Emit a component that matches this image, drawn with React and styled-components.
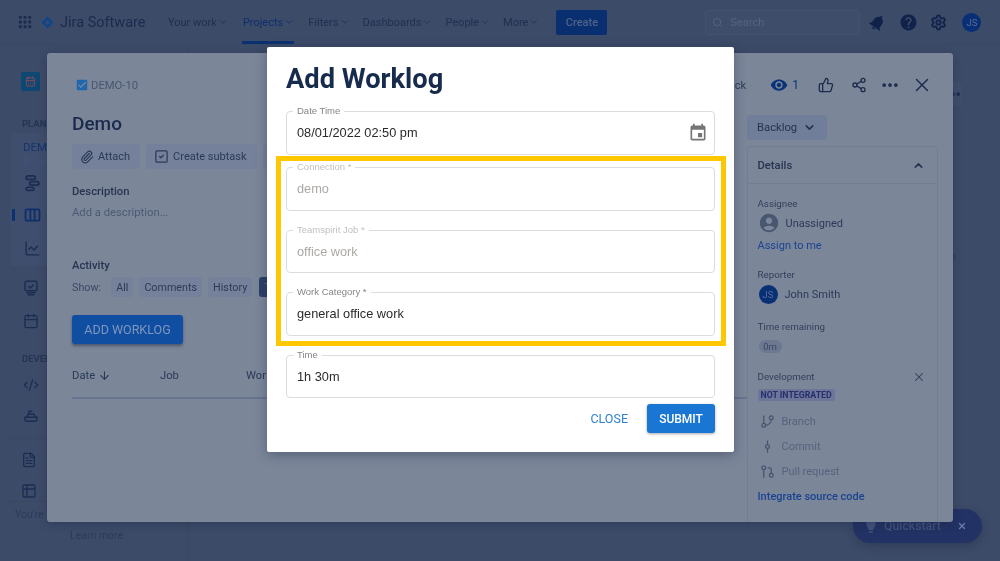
import React from 'react';
import styled, { createGlobalStyle } from 'styled-components';
import {
  ArrowDown, Calendar, CalendarDays, ChartLine, ChevronDown, ChevronUp, CodeXml, Ellipsis, FileText, GitBranch,
  GitCommitVertical, GitPullRequest, Grip, Paperclip, Search, Settings, Share2, SquareCheck, Table2, ThumbsUp, X,
} from 'lucide-react';
import { MdCheckBox, MdEvent, MdHelp, MdLightbulb, MdNotifications, MdVisibility, MdAccountCircle } from 'react-icons/md';

const GlobalStyle = createGlobalStyle`
  html, body { margin: 0; padding: 0; background: #3c4b68; }
  * { box-sizing: border-box; }
`;

const Stage = styled.div`
  position: relative;
  width: 1000px;
  height: 561px;
  overflow: hidden;
  background: #3c4b68;
  font-family: Roboto, "Liberation Sans", sans-serif;
  color: #1f2c4a;
  filter: blur(0.3px);
`;

const TopNav = styled.header`
  display: flex;
  align-items: center;
  height: 45px;
  padding: 0 18px 0 17px;
  border-bottom: 1px solid #394763;
`;

const Brand = styled.div`
  display: flex;
  flex: none;
  align-items: center;
  gap: 6px;
  width: 151px;
  font-size: 14.5px;
  white-space: nowrap;
  color: #1b2b4e;
  svg.grip { margin-right: 2px; }
`;

const NavItem = styled.div`
  position: relative;
  display: flex;
  flex: none;
  align-items: center;
  align-self: stretch;
  gap: 1px;
  margin-right: ${(p) => p.$gap}px;
  font-size: 11px;
  white-space: nowrap;
  color: ${(p) => (p.$active ? '#0f2f6c' : '#1f2f50')};
  &::after {
    content: '';
    display: ${(p) => (p.$active ? 'block' : 'none')};
    position: absolute;
    left: -1px;
    right: 0;
    bottom: 0;
    height: 3px;
    background: #0b3270;
  }
`;

const CreateBtn = styled.div`
  display: flex;
  flex: none;
  align-items: center;
  justify-content: center;
  width: 51px;
  height: 25px;
  border-radius: 2px;
  background: #0a2f70;
  color: #4f6388;
  font-size: 11px;
  font-weight: 500;
`;

const SearchBox = styled.div`
  display: flex;
  flex: none;
  align-items: center;
  gap: 7px;
  width: 155px;
  height: 25px;
  margin-left: 98px;
  padding-left: 6px;
  border: 1px solid #44536d;
  border-radius: 3px;
  background: #3e4d6a;
  font-size: 11px;
  color: #56657f;
`;

const NavIcons = styled.div`
  display: flex;
  align-items: center;
  gap: 12px;
  margin-left: 8px;
  color: #10224a;
`;

const Avatar = styled.div`
  display: flex;
  flex: none;
  align-items: center;
  justify-content: center;
  width: ${(p) => p.$size}px;
  height: ${(p) => p.$size}px;
  margin-left: ${(p) => p.$ml || 0}px;
  border-radius: 50%;
  background: #092f74;
  color: #566c98;
  font-size: ${(p) => p.$font}px;
`;

const Body = styled.div`
  display: flex;
`;

const Sidebar = styled.aside`
  display: flex;
  flex: none;
  flex-direction: column;
  width: 189px;
  height: 516px;
  border-right: 1px solid #394763;
`;

const ProjectIcon = styled.div`
  display: flex;
  align-items: center;
  justify-content: center;
  width: 19px;
  height: 19px;
  margin: 27px 0 27px 21px;
  border-radius: 2px;
  background: #0e4872;
  color: #8a4a5a;
`;

const SideHeading = styled.div`
  margin: ${(p) => p.$top || 0}px 0 0 22px;
  font-size: 9.5px;
  font-weight: 700;
  color: #263552;
  line-height: 12px;
`;

const SideGroup = styled.div`
  width: 176px;
  margin: 3px 0 7px 10px;
  padding: 7px 0 3px 13px;
  border-radius: 3px;
  background: #3f4e6c;
`;

const SideProject = styled.div`
  font-size: 11.5px;
  line-height: 14px;
  color: ${(p) => (p.$muted ? '#41537a' : '#143470')};
`;

const SideIcon = styled.div`
  position: relative;
  display: flex;
  align-items: center;
  height: ${(p) => p.$h}px;
  margin-top: ${(p) => p.$top || 0}px;
  padding-left: ${(p) => p.$pad ?? 23}px;
  color: #1c2d52;
  &::before {
    content: '';
    display: ${(p) => (p.$marker ? 'block' : 'none')};
    position: absolute;
    left: -11px;
    top: 12px;
    width: 3px;
    height: 12px;
    background: #0b3270;
  }
`;

const SideDivider = styled.div`
  width: 170px;
  height: 1px;
  flex: none;
  margin: ${(p) => p.$m};
  background: #394763;
`;

const SideNote = styled.div`
  margin-left: ${(p) => p.$left}px;
  margin-top: ${(p) => p.$top}px;
  font-size: 10.5px;
  line-height: 12px;
  color: #2c3b5a;
  white-space: nowrap;
`;

const PageContent = styled.main`
  display: flex;
  flex: 1;
  flex-direction: column;
  align-items: flex-end;
  padding: 37px 38px 0 0;
`;

const BoardMenu = styled.div`
  display: flex;
  align-items: center;
  justify-content: flex-end;
  width: 24px;
  height: 24px;
  border-radius: 3px;
  background: #3f4e6b;
  color: #1d2c4d;
`;

const HelpMark = styled.div`
  margin: 146px 6px 0 0;
  font-size: 12px;
  color: #2c3b5a;
`;

const IssueModal = styled.section`
  position: absolute;
  left: 47px;
  top: 53px;
  width: 906px;
  height: 469px;
  padding: 0 15px 0 25px;
  border-radius: 3px;
  overflow: hidden;
  background: #7b8699;
  box-shadow: 0 2px 8px rgba(20, 30, 60, 0.3);
`;

const IssueTop = styled.div`
  display: flex;
  align-items: center;
  height: 59px;
  padding: 5px 0 0 3px;
  font-size: 11.25px;
  color: #3f4e6b;
`;

const IssueKey = styled.div`
  display: flex;
  align-items: center;
  gap: 2px;
  color: #485670;
  svg { color: #1f68b0; }
`;

const TopActions = styled.div`
  display: flex;
  align-items: center;
  margin-left: auto;
  color: #1d2c4d;
`;

const FeedbackText = styled.span`
  margin-right: 24px;
  font-size: 11.25px;
  color: #2f3e5c;
`;

const WatchCount = styled.div`
  display: flex;
  align-items: center;
  gap: 4px;
  margin-right: 9px;
  font-size: 12px;
  color: #0a3276;
`;

const ActionSlot = styled.div`
  display: flex;
  justify-content: center;
  width: ${(p) => p.$w}px;
`;

const IssueBody = styled.div`
  display: grid;
  grid-template-columns: 675px 191px;
`;

const MainCol = styled.div`
  display: flex;
  flex-direction: column;
`;

const IssueTitle = styled.h1`
  margin: 0;
  font-size: 19px;
  font-weight: 500;
  line-height: 24px;
  color: #1b2a4c;
`;

const ActionRow = styled.div`
  display: flex;
  gap: 6px;
  margin-top: 8px;
`;

const GhostBtn = styled.div`
  display: flex;
  align-items: center;
  gap: 4px;
  height: 25px;
  padding: 0 10px 0 8px;
  border-radius: 3px;
  background: #75819a;
  font-size: 11px;
  color: #2b3a57;
`;

const SectionLabel = styled.div`
  margin-top: ${(p) => p.$top}px;
  font-size: 11.25px;
  font-weight: 500;
  line-height: 15px;
  color: #26344f;
`;

const Placeholder = styled.div`
  margin-top: 6px;
  font-size: 11.25px;
  line-height: 15px;
  color: #4c5a74;
`;

const ShowRow = styled.div`
  display: flex;
  align-items: center;
  gap: 6px;
  margin-top: 3.5px;
  height: 22px;
  font-size: 10.75px;
  color: #3b4966;
`;

const ShowTab = styled.div`
  display: flex;
  flex: none;
  align-items: center;
  height: 20px;
  min-width: ${(p) => (p.$on ? 40 : 0)}px;
  padding: 0 5px;
  margin-left: ${(p) => p.$left || 0}px;
  border-radius: 3px;
  background: ${(p) => (p.$on ? '#2c3f6a' : '#75819a')};
  font-size: 10.75px;
  color: ${(p) => (p.$on ? '#66769a' : '#2b3a57')};
`;

const AddWorklog = styled.div`
  display: flex;
  align-items: center;
  justify-content: center;
  width: 111px;
  height: 29px;
  margin-top: 17px;
  border-radius: 3px;
  background: #0f4ea0;
  box-shadow: 0 2px 3px rgba(20, 30, 60, 0.45);
  font-size: 12.5px;
  color: #7f96bd;
`;

const TableHead = styled.div`
  display: grid;
  grid-template-columns: 88px 86px 1fr;
  align-items: center;
  height: 51px;
  margin-top: 4px;
  padding-top: 5px;
  border-bottom: 2px solid #67748f;
  font-size: 11.25px;
  color: #2b3a57;
`;

const SortLabel = styled.div`
  display: flex;
  align-items: center;
  gap: 3px;
`;

const SideCol = styled.div`
  display: flex;
  flex-direction: column;
`;

const StatusBtn = styled.div`
  display: flex;
  align-items: center;
  gap: 6px;
  width: 80px;
  height: 25px;
  margin-top: 3px;
  padding-left: 10px;
  border-radius: 3px;
  background: #717e99;
  font-size: 11.25px;
  color: #26344f;
`;

const DetailsPanel = styled.div`
  height: 380px;
  margin-top: 6px;
  border: 1px solid #727e93;
  border-radius: 3px;
`;

const DetailsHead = styled.div`
  display: flex;
  align-items: center;
  justify-content: space-between;
  height: 37px;
  padding: 0 12px 0 9.5px;
  border-bottom: 1px solid #727e93;
  font-size: 11.25px;
  font-weight: 500;
  color: #26344f;
`;

const DetailsBody = styled.div`
  display: flex;
  flex-direction: column;
  padding: 0 12px 0 9.5px;
`;

const FieldLabel = styled.div`
  display: flex;
  align-items: center;
  justify-content: space-between;
  margin-top: ${(p) => p.$top}px;
  font-size: 9.75px;
  line-height: 14px;
  color: #333f5a;
  svg { margin-right: -1px; }
`;

const PersonRow = styled.div`
  display: flex;
  align-items: center;
  gap: 7px;
  margin-top: 1px;
  height: 22px;
  padding-left: 1px;
  font-size: 11px;
  color: #2b3a57;
`;

const LinkText = styled.div`
  margin-top: ${(p) => p.$top}px;
  font-size: 11px;
  font-weight: ${(p) => p.$weight || 400};
  line-height: 15px;
  color: #1b4392;
`;

const TimePill = styled.div`
  width: 23px;
  height: 13px;
  margin: 6px 0 0 1px;
  border-radius: 7px;
  background: #6c7890;
  font-size: 9.5px;
  line-height: 13px;
  text-align: center;
  color: #3a4763;
`;

const Lozenge = styled.div`
  align-self: flex-start;
  height: 12px;
  margin-top: 5px;
  padding: 0 3px;
  border-radius: 2px;
  background: #6d7599;
  font-size: 8.75px;
  font-weight: 700;
  line-height: 12px;
  color: #24306c;
`;

const DevList = styled.div`
  margin-top: 8px;
`;

const DevRow = styled.div`
  display: flex;
  align-items: center;
  gap: 7px;
  height: 25px;
  padding-left: 2px;
  font-size: 11px;
  color: #56637c;
  svg { color: #47556f; }
`;

const Quickstart = styled.div`
  position: absolute;
  left: 853px;
  top: 509px;
  display: flex;
  align-items: center;
  width: 129px;
  height: 34px;
  padding-left: 10px;
  border-radius: 17px;
  background: #233264;
  box-shadow: 0 3px 8px rgba(20, 30, 60, 0.3);
  font-size: 12.25px;
  font-weight: 500;
  color: #445279;
  svg.bulb { margin-right: 5px; }
  svg.close { margin-left: 16px; color: #6c7ba8; }
`;

const WorklogDialog = styled.form`
  position: absolute;
  left: 267px;
  top: 47px;
  display: flex;
  flex-direction: column;
  width: 467px;
  height: 405px;
  padding: 0 19px;
  border-radius: 2px;
  background: #fff;
  box-shadow: 0 3px 12px rgba(20, 30, 60, 0.35);
  font-family: "Liberation Sans", Arial, sans-serif;
`;

const DialogTitle = styled.h2`
  margin: 15px 0 0;
  font-family: Roboto, "Liberation Sans", sans-serif;
  font-size: 27.25px;
  font-weight: 700;
  line-height: 34px;
  color: #172b4d;
`;

const FieldList = styled.div`
  display: flex;
  flex-direction: column;
  margin-top: 15px;
`;

const FieldBox = styled.div`
  position: relative;
  display: flex;
  align-items: center;
  justify-content: space-between;
  height: 43.5px;
  margin-top: ${(p) => p.$top}px;
  padding: 0 6px 0 10px;
  border: 1.5px solid #dcdcdc;
  border-radius: 4px;
`;

const FloatLabel = styled.label`
  position: absolute;
  left: 6px;
  top: -7px;
  padding: 0 4px;
  background: #fff;
  font-size: 9.5px;
  line-height: 12px;
  color: ${(p) => (p.$disabled ? '#c0c0c0' : '#858585')};
`;

const FieldValue = styled.div`
  font-size: 12.75px;
  color: ${(p) => (p.$disabled ? '#ada8a4' : '#2a2a2a')};
`;

const DialogActions = styled.div`
  display: flex;
  align-items: center;
  justify-content: flex-end;
  gap: 19px;
  margin-top: 6px;
  font-family: Roboto, "Liberation Sans", sans-serif;
`;

const CloseBtn = styled.div`
  font-size: 12.5px;
  font-weight: 400;
  color: #2f80d2;
`;

const SubmitBtn = styled.div`
  display: flex;
  align-items: center;
  justify-content: center;
  width: 68px;
  height: 29px;
  border-radius: 3px;
  background: #1976d2;
  box-shadow: 0 1px 3px rgba(0, 0, 0, 0.35);
  font-size: 12px;
  font-weight: 500;
  color: #fff;
`;

const Highlight = styled.div`
  position: absolute;
  left: 9px;
  top: 109px;
  width: 450px;
  height: 190px;
  border: 5px solid #ffc700;
  pointer-events: none;
`;

const fields = [
  { label: 'Date Time', value: '08/01/2022 02:50 pm', icon: true, top: 0 },
  { label: 'Connection *', value: 'demo', disabled: true, top: 12.5 },
  { label: 'Teamspirit Job *', value: 'office work', disabled: true, top: 19 },
  { label: 'Work Category *', value: 'general office work', top: 19 },
  { label: 'Time', value: '1h 30m', top: 19 },
];

const navItems = [
  { label: 'Your work', gap: 15 },
  { label: 'Projects', gap: 14, active: true },
  { label: 'Filters', gap: 13 },
  { label: 'Dashboards', gap: 13 },
  { label: 'People', gap: 13 },
  { label: 'More', gap: 17 },
];

function ShipIcon() {
  return (
    <svg width="16" height="16" viewBox="0 0 24 24" fill="none" stroke="currentColor" strokeWidth="2.2">
      <path d="M3 14h18v3a3 3 0 0 1-3 3H6a3 3 0 0 1-3-3z" />
      <path d="M6 14l2-5h8l3 5" />
      <path d="M9 9V5h5" />
    </svg>
  );
}

function RoadmapIcon() {
  return (
    <svg width="17" height="18" viewBox="0 0 24 24" fill="none" stroke="currentColor" strokeWidth="2.4">
      <rect x="3" y="2" width="13" height="5" rx="2.5" />
      <rect x="8" y="10" width="13" height="5" rx="2.5" />
      <rect x="3" y="18" width="11" height="4.5" rx="2.2" />
    </svg>
  );
}

function BoardIcon() {
  return (
    <svg width="17" height="14" viewBox="0 0 24 20" fill="none" stroke="#0f2f6c" strokeWidth="2.6">
      <rect x="2" y="2" width="20" height="16" rx="2" />
      <path d="M9 2v16M15 2v16" />
    </svg>
  );
}

function MonitorIcon() {
  return (
    <svg width="16" height="16" viewBox="0 0 24 24" fill="none" stroke="currentColor" strokeWidth="2.2">
      <rect x="3" y="2" width="18" height="14" rx="2" />
      <path d="M8 9l3 3 5-5M5 19h14M7 22h10" />
    </svg>
  );
}

function LogoMark() {
  return (
    <svg width="13" height="13" viewBox="0 0 24 24">
      <path d="M12 1L23 12 12 23 1 12z" fill="#104688" />
      <path d="M12 8l4 4-4 4-4-4z" fill="#3c4b68" />
    </svg>
  );
}

export default function App() {
  return (
    <>
      <GlobalStyle />
      <Stage>
        <TopNav>
          <Brand>
            <Grip className="grip" size={16} strokeWidth={3} />
            <LogoMark />
            <span>Jira Software</span>
          </Brand>
          {navItems.map((item) => (
            <NavItem key={item.label} $gap={item.gap} $active={item.active}>
              {item.label}
              <ChevronDown size={10} />
            </NavItem>
          ))}
          <CreateBtn>Create</CreateBtn>
          <SearchBox>
            <Search size={11} />
            Search
          </SearchBox>
          <NavIcons>
            <MdNotifications size={19} style={{ transform: 'rotate(35deg)' }} />
            <MdHelp size={19} />
            <Settings size={17} strokeWidth={2.6} />
            <Avatar $size={19} $font={9.5} $ml={3}>JS</Avatar>
          </NavIcons>
        </TopNav>

        <Body>
          <Sidebar>
            <ProjectIcon><CalendarDays size={11} /></ProjectIcon>
            <SideHeading>PLANNING</SideHeading>
            <SideGroup>
              <SideProject>DEMO</SideProject>
              <SideProject $muted>Board</SideProject>
              <SideIcon $h={28} $pad={1} $top={1}><RoadmapIcon /></SideIcon>
              <SideIcon $h={36} $pad={1} $marker><BoardIcon /></SideIcon>
              <SideIcon $h={30} $pad={1}><ChartLine size={17} /></SideIcon>
            </SideGroup>
            <SideIcon $h={30}><MonitorIcon /></SideIcon>
            <SideIcon $h={36}><Calendar size={16} /></SideIcon>
            <SideHeading $top={14}>DEVELOPMENT</SideHeading>
            <SideIcon $h={40}><CodeXml size={16} /></SideIcon>
            <SideIcon $h={22}><ShipIcon /></SideIcon>
            <SideDivider $m="11px 0 7px 8px" />
            <SideIcon $h={28} $pad={21}><FileText size={16} /></SideIcon>
            <SideIcon $h={21} $pad={21} $top={6}><Table2 size={16} /></SideIcon>
            <SideDivider $m="0 0 0 8px" />
            <SideNote $left={15} $top={7}>You're in a team-managed project</SideNote>
            <SideNote $left={70} $top={9}>Learn more</SideNote>
          </Sidebar>
          <PageContent>
            <BoardMenu><Ellipsis size={18} strokeWidth={3} /></BoardMenu>
            <HelpMark>?</HelpMark>
          </PageContent>
        </Body>

        <Quickstart>
          <MdLightbulb className="bulb" size={16} />
          Quickstart
          <X className="close" size={10} strokeWidth={3} />
        </Quickstart>

        <IssueModal>
          <IssueTop>
            <IssueKey><MdCheckBox size={14} />DEMO-10</IssueKey>
            <TopActions>
              <FeedbackText>Give feedback</FeedbackText>
              <WatchCount><MdVisibility size={18} />1</WatchCount>
              <ActionSlot $w={36}><ThumbsUp size={16} /></ActionSlot>
              <ActionSlot $w={30}><Share2 size={16} /></ActionSlot>
              <ActionSlot $w={32}><Ellipsis size={20} strokeWidth={2.5} /></ActionSlot>
              <ActionSlot $w={32}><X size={22} strokeWidth={1.6} /></ActionSlot>
            </TopActions>
          </IssueTop>
          <IssueBody>
            <MainCol>
              <IssueTitle>Demo</IssueTitle>
              <ActionRow>
                <GhostBtn><Paperclip size={14} />Attach</GhostBtn>
                <GhostBtn><SquareCheck size={15} />Create subtask</GhostBtn>
                <GhostBtn>Link issue</GhostBtn>
              </ActionRow>
              <SectionLabel $top={14.5}>Description</SectionLabel>
              <Placeholder>Add a description...</Placeholder>
              <SectionLabel $top={38}>Activity</SectionLabel>
              <ShowRow>
                Show:
                <ShowTab $left={4}>All</ShowTab>
                <ShowTab>Comments</ShowTab>
                <ShowTab>History</ShowTab>
                <ShowTab $on $left={1}>T</ShowTab>
              </ShowRow>
              <AddWorklog>ADD WORKLOG</AddWorklog>
              <TableHead>
                <SortLabel>Date <ArrowDown size={13} /></SortLabel>
                <div>Job</div>
                <div>Wor</div>
              </TableHead>
            </MainCol>
            <SideCol>
              <StatusBtn>Backlog <ChevronDown size={13} strokeWidth={3} /></StatusBtn>
              <DetailsPanel>
                <DetailsHead>Details <ChevronUp size={13} strokeWidth={3} /></DetailsHead>
                <DetailsBody>
                  <FieldLabel $top={13}>Assignee</FieldLabel>
                  <PersonRow>
                    <MdAccountCircle size={22} color="#49566f" style={{ margin: '0 -1px' }} />
                    Unassigned
                  </PersonRow>
                  <LinkText $top={4}>Assign to me</LinkText>
                  <FieldLabel $top={15}>Reporter</FieldLabel>
                  <PersonRow>
                    <Avatar $size={19} $font={9.5}>JS</Avatar>
                    John Smith
                  </PersonRow>
                  <FieldLabel $top={15}>Time remaining</FieldLabel>
                  <TimePill>0m</TimePill>
                  <FieldLabel $top={17}>Development <X size={14} strokeWidth={1.8} /></FieldLabel>
                  <Lozenge>NOT INTEGRATED</Lozenge>
                  <DevList>
                    <DevRow><GitBranch size={15} />Branch</DevRow>
                    <DevRow><GitCommitVertical size={15} />Commit</DevRow>
                    <DevRow><GitPullRequest size={15} />Pull request</DevRow>
                  </DevList>
                  <LinkText $top={5} $weight={500}>Integrate source code</LinkText>
                </DetailsBody>
              </DetailsPanel>
            </SideCol>
          </IssueBody>
        </IssueModal>

        <WorklogDialog>
          <DialogTitle>Add Worklog</DialogTitle>
          <FieldList>
            {fields.map((field) => (
              <FieldBox key={field.label} $top={field.top}>
                <FloatLabel $disabled={field.disabled}>{field.label}</FloatLabel>
                <FieldValue $disabled={field.disabled}>{field.value}</FieldValue>
                {field.icon && <MdEvent size={20} color="#757575" />}
              </FieldBox>
            ))}
          </FieldList>
          <DialogActions>
            <CloseBtn>CLOSE</CloseBtn>
            <SubmitBtn>SUBMIT</SubmitBtn>
          </DialogActions>
          <Highlight />
        </WorklogDialog>
      </Stage>
    </>
  );
}
